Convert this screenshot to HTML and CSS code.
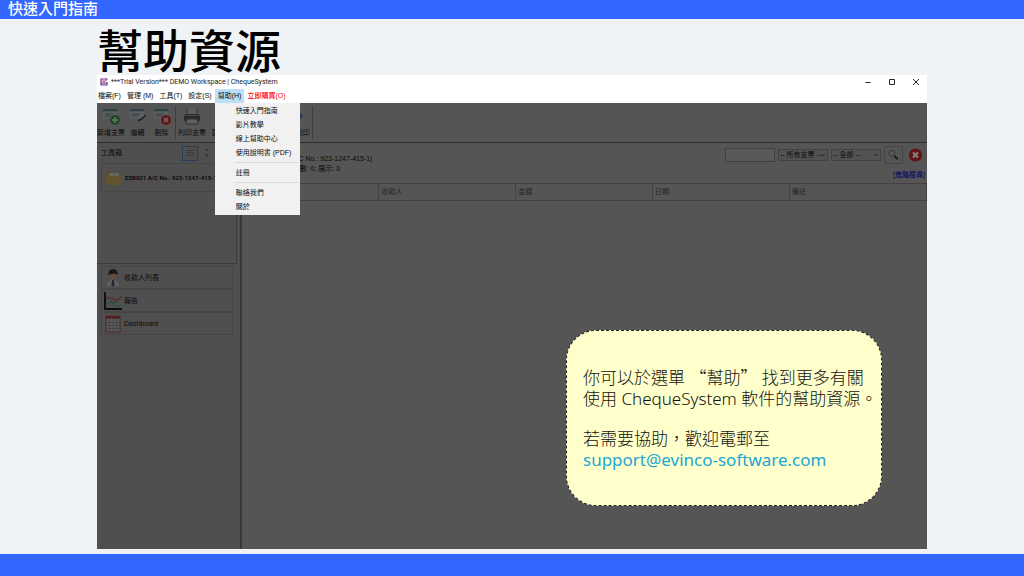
FILE: index.html
```html
<!DOCTYPE html>
<html lang="zh-Hant">
<head>
<meta charset="utf-8">
<title>快速入門指南</title>
<link rel="stylesheet" href="styles.css">
</head>
<body>
<header class="guide-bar">快速入門指南</header>
<main class="slide">
  <h1 class="slide-title">幫助資源</h1>
  <section class="window">
    <div class="titlebar">
      <svg class="app-icon" viewBox="0 0 8 8"><path d="M7 4v3H1V1h6" fill="#fff" stroke="#66358c" stroke-width="1.2"/><path d="M1 5.200h6" stroke="#66358c"/><path d="M2.500 2.500l1.500 1.500L7.600.6" fill="none" stroke="#c03e76" stroke-width="1.100"/></svg>
      <span class="titlebar-text">***Trial Version*** DEMO Workspace | ChequeSystem</span>
      <div class="window-controls">
        <button class="window-button" aria-label="最小化"><svg viewBox="0 0 8 8"><path d="M1.500 4.500h5"/></svg></button>
        <button class="window-button" aria-label="最大化"><svg viewBox="0 0 8 8"><path d="M1.500 1.500h5v5h-5z"/></svg></button>
        <button class="window-button" aria-label="關閉"><svg viewBox="0 0 8 8"><path d="M1 1l6 6M7 1L1 7"/></svg></button>
      </div>
    </div>
    <nav class="menubar">
      <button class="menu-item">檔案(F)</button>
      <button class="menu-item">管理 (M)</button>
      <button class="menu-item">工具(T)</button>
      <button class="menu-item">設定(S)</button>
      <div class="menu-anchor">
        <button class="menu-item menu-item-open">幫助(H)</button>
        <div class="dropdown">
          <button class="dropdown-item">快速入門指南</button>
          <button class="dropdown-item">影片教學</button>
          <button class="dropdown-item">線上幫助中心</button>
          <button class="dropdown-item">使用說明書 (PDF)</button>
          <hr class="dropdown-line">
          <button class="dropdown-item">註冊</button>
          <hr class="dropdown-line">
          <button class="dropdown-item">聯絡我們</button>
          <button class="dropdown-item">關於</button>
        </div>
      </div>
      <button class="menu-item menu-item-buy">立即購買(O)</button>
    </nav>
    <div class="toolbar">
      <button class="tool"><svg class="tool-icon" viewBox="0 0 20 20"><path d="M2 2h14v2H2z" fill="#29404a"/><path d="M2 5h14v6H2z" fill="#5b6062"/><path d="M4 7h8M4 9h6" stroke="#343b3e"/><circle cx="14" cy="13" r="5" fill="#1e4a20"/><path d="M14 10v6M11 13h6" stroke="#6b746a" stroke-width="1.600"/></svg>新增支票</button>
      <button class="tool"><svg class="tool-icon" viewBox="0 0 20 20"><path d="M2 2h14v2H2z" fill="#29404a"/><path d="M2 5h14v6H2z" fill="#5b6062"/><path d="M4 7h8M4 9h6" stroke="#343b3e"/><path d="M18 8l-5 4.500-3 1" fill="none" stroke="#1f1f1f" stroke-width="1.500"/></svg>編輯</button>
      <button class="tool"><svg class="tool-icon" viewBox="0 0 20 20"><path d="M2 2h14v2H2z" fill="#29404a"/><path d="M2 5h14v6H2z" fill="#5b6062"/><path d="M4 7h8M4 9h6" stroke="#343b3e"/><circle cx="14" cy="13" r="5" fill="#651515"/><path d="M12 11l4 4M16 11l-4 4" stroke="#776a6a" stroke-width="1.500"/></svg>刪除</button>
      <span class="tool-divider"></span>
      <button class="tool"><svg class="tool-icon" viewBox="0 0 20 20"><path d="M5 1h10v7H5z" fill="#5c5c5c"/><path d="M5 1v7M15 1v7" stroke="#343434"/><rect x="2" y="7" width="16" height="8" rx="3" fill="#2b2b2b"/><path d="M4 8.500h12" stroke="#484848"/><path d="M5 12h10l1 5H4z" fill="#606060" stroke="#333"/></svg>列印支票</button>
      <button class="tool tool-spaced"><svg class="tool-icon" viewBox="0 0 20 20"><path d="M2 2h14v2H2z" fill="#29404a"/><path d="M2 5h14v6H2z" fill="#5b6062"/></svg>匯入支票</button>
      <button class="tool tool-end"><svg class="tool-icon" viewBox="0 0 20 20"><path d="M3 3h8v12H3z" fill="#5b6062"/><path d="M11 4l5 5-5 5zM16 9h-5" fill="none" stroke="#243357" stroke-width="1.500"/></svg>批次列印</button>
      <span class="tool-divider"></span>
    </div>
    <div class="workspace">
      <aside class="sidebar">
        <div class="toolbox">
          <div class="toolbox-head">工具箱
            <div class="toolbox-actions">
              <button class="view-button view-button-on" aria-label="列表"><svg viewBox="0 0 12 10"><path d="M2 2.500h8M2 5h8M2 7.500h8" stroke="#3b3732"/></svg></button>
              <button class="view-button" aria-label="排序"><svg viewBox="0 0 12 10"><path d="M4.500 3.500l1.500-2 1.500 2zM4.500 6.500l1.500 2 1.500-2z" fill="#352e2e"/></svg></button>
            </div>
          </div>
          <button class="account"><svg class="account-icon" viewBox="0 0 18 16"><path d="M1 3l5-2 1 2h9v10H1z" fill="#574b29"/><path d="M4 3h10v5H4z" fill="#66665c"/><path d="M1 6h16l-1 9H2z" fill="#62552d"/></svg><span class="account-name">ESB021 A/C No.: 923-1247-415-1</span></button>
        </div>
        <div class="shortcuts">
          <button class="shortcut"><svg class="shortcut-icon" viewBox="0 0 18 18"><path d="M3 17q0-6 6-6t6 6z" fill="#606060"/><circle cx="9" cy="6" r="4" fill="#604d3c"/><path d="M4.500 6Q4 0 9 0t4.500 6Q11 3 4.500 6z" fill="#1c1815"/><path d="M8.200 11h1.600l1 5L9 17.500 7.200 16z" fill="#202833"/></svg>收款人列表</button>
          <button class="shortcut"><svg class="shortcut-icon" viewBox="0 0 18 18"><path d="M1 0v17h17" fill="none" stroke="#0c0c0c" stroke-width="1.800"/><path d="M2 7q3-3 7 0t9-3" fill="none" stroke="#572b29" stroke-width="1.200"/><path d="M2 13q4-5 8-1t7 1" fill="none" stroke="#28533a" stroke-width="1.200"/><path d="M2 4l8 7 7-5" fill="none" stroke="#35453d"/></svg>報告</button>
          <button class="shortcut"><svg class="shortcut-icon" viewBox="0 0 18 18"><rect x="2" y="1" width="14" height="16" fill="#5a5a5a" stroke="#522727"/><path d="M2 2.500h14" stroke="#4d1717" stroke-width="2"/><path d="M2 7.500h14M2 10.500h14M2 13.500h14M5.500 4v13M9 4v13M12.500 4v13" stroke="#444" stroke-width=".8"/></svg>Dashboard</button>
        </div>
      </aside>
      <div class="content">
        <div class="content-head">
          <div class="summary"><div>帳戶 ESB021 (A/C No.: 923-1247-415-1)</div><div>已選擇: 0; 支票總數: 0; 展示: 0</div></div>
          <div class="search">
            <div class="search-row">
              <input class="search-input" type="text" aria-label="搜尋">
              <select class="search-select" aria-label="支票類別"><option>-- 所有支票 --</option></select>
              <select class="search-select" aria-label="範圍"><option>-- 全部 --</option></select>
              <button class="search-button" aria-label="搜尋"><svg viewBox="0 0 14 14"><circle cx="5" cy="5" r="3.500" fill="#555c5f" stroke="#303030"/><path d="M8 8l4 4" stroke="#171717" stroke-width="2"/></svg></button>
              <button class="clear-button" aria-label="清除"><svg viewBox="0 0 14 14"><circle cx="7" cy="7" r="6.600" fill="#641617"/><path d="M4.500 4.500l5 5M9.500 4.500l-5 5" stroke="#858080" stroke-width="2.200"/></svg></button>
            </div>
            <a class="advanced" href="#">[進階搜尋]</a>
          </div>
        </div>
        <table class="cheques">
          <thead><tr><th>支票號碼</th><th>收款人</th><th>金額</th><th>日期</th><th>備註</th></tr></thead>
        </table>
      </div>
    </div>
    <aside class="callout">
      <p>你可以於選單 <span class="quoted">“幫助”</span> 找到更多有關<br>使用 ChequeSystem 軟件的幫助資源。</p>
      <p>若需要協助，歡迎電郵至<br><a class="mail" href="mailto:support@evinco-software.com">support@evinco-software.com</a></p>
    </aside>
  </section>
</main>
<footer class="footer-bar"></footer>
</body>
</html>
```

FILE: styles.css
```css
* { box-sizing: border-box; }
body {
  margin: 0;
  min-height: 100vh;
  display: flex;
  flex-direction: column;
  background: #f0f3f5;
  font-family: "Liberation Sans", "Noto Sans CJK TC", sans-serif;
}
button, input, select {
  margin: 0;
  padding: 0;
  border: 0;
  background: none;
  color: inherit;
  font: inherit;
}
svg { display: block; }
.guide-bar {
  height: 19px;
  padding-left: 8px;
  background: #3366ff;
  color: #fff;
  font: 500 15px/15px "Noto Sans CJK TC", sans-serif;
}
.slide {
  flex: 1;
  display: flex;
  flex-direction: column;
  padding: 0 97px 5px;
}
.slide-title {
  margin: 0;
  height: 56px;
  font: 500 46px/58px "Noto Sans CJK TC", sans-serif;
  color: #000;
}
.window {
  position: relative;
  flex: 1;
  display: flex;
  flex-direction: column;
  background: #555;
  font-size: 7px;
  line-height: 10px;
  color: #0b0b0b;
}
.titlebar {
  display: flex;
  align-items: center;
  gap: 3px;
  height: 14px;
  padding-left: 3px;
  background: #fff;
  color: #222;
}
.titlebar-text { font-family: Roboto, sans-serif; }
.app-icon { width: 8px; height: 8px; }
.window-controls { display: flex; gap: 16px; margin-left: auto; padding-right: 7px; }
.window-button { width: 8px; height: 8px; }
.window-button svg { fill: none; stroke: #222; stroke-width: 1; }
.menubar {
  position: relative;
  z-index: 2;
  display: flex;
  height: 14px;
  background: #fff;
}
.menu-item { height: 14px; padding: 0 3px; white-space: nowrap; }
.menu-item:first-child { padding-left: 1px; }
.menu-anchor { position: relative; }
.menu-anchor .menu-item-open { padding-left: 3px; background: #bcdff7; }
.menu-item-buy { color: #f00; font-weight: 500; }
.dropdown {
  position: absolute;
  top: 14px;
  left: 0;
  width: 85px;
  padding: 1px 0;
  background: #f1f1f1;
}
.dropdown-item {
  display: block;
  width: 100%;
  height: 14px;
  padding-left: 21px;
  text-align: left;
  white-space: nowrap;
}
.dropdown-line { height: 1px; margin: 2px 2px 3px 20px; border: 0; background: #d8d8d8; }
.toolbar {
  display: flex;
  align-items: stretch;
  height: 40px;
  border-bottom: 1px solid #2d2d2d;
}
.tool {
  display: flex;
  flex-direction: column;
  align-items: center;
  gap: 1px;
  min-width: 23px;
  padding-top: 4px;
  white-space: nowrap;
}
.tool-icon { width: 20px; height: 20px; }
.tool-divider { width: 1px; margin: 3px 2px; background: #3d3d3d; }
.tool + .tool { margin-left: 1px; }
.tool + .tool-spaced { margin-left: 6px; }
.tool + .tool-end { margin-left: auto; }
.tool-end + .tool-divider { margin-right: 74%; }
.workspace { flex: 1; display: flex; }
.sidebar {
  width: 145px;
  border-right: 2px solid #393939;
  background: #4f4f4f;
}
.toolbox {
  height: 121px;
  margin-right: 3px;
  border: 1px solid #3c3c3c;
  border-width: 0 1px 1px 0;
}
.toolbox-head {
  display: flex;
  align-items: center;
  height: 20px;
  padding-left: 4px;
}
.toolbox-actions { display: flex; gap: 1px; margin-left: auto; padding-right: 21px; }
.view-button { width: 16px; height: 15px; padding: 1px; }
.view-button-on { border: 1px solid #273e5b; }
.account, .shortcut {
  display: flex;
  align-items: center;
  width: 100%;
  border: 1px solid #464646;
}
.account { height: 29px; margin-left: 4px; padding-left: 3px; gap: 2px; }
.account-icon { flex: none; width: 18px; height: 16px; }
.account-name {
  font-family: Roboto, sans-serif;
  font-size: 6px;
  font-weight: 700;
  white-space: nowrap;
}
.shortcuts { padding: 2px 7px 0 4px; }
.shortcut { height: 23px; padding-left: 2px; gap: 2px; }
.shortcut-icon { width: 18px; height: 18px; }
.content { flex: 1; min-width: 0; }
.content-head {
  display: flex;
  justify-content: space-between;
  height: 40px;
  padding: 3px 2px 0 4px;
}
.summary { padding-top: 8px; white-space: nowrap; }
.search-row { display: flex; align-items: center; gap: 3px; }
.search-input { width: 50px; height: 14px; border: 1px solid #3f3f3f; background: #595959; }
.search-select {
  width: 50px;
  height: 12px;
  padding-left: 1px;
  border: 1px solid #424242;
  appearance: none;
  background-color: #525252;
  background-image:
    linear-gradient(45deg, transparent 50%, #2b2b2b 50%, #2b2b2b 75%, transparent 75%),
    linear-gradient(315deg, transparent 50%, #2b2b2b 50%, #2b2b2b 75%, transparent 75%);
  background-repeat: no-repeat;
  background-position: right 4px center, right 2px center;
  background-size: 2px 3px;
  line-height: 10px;
}
.search-button { width: 19px; height: 18px; padding: 2px; border: 1px solid #454545; }
.search-button svg { width: 13px; height: 12px; }
.clear-button { width: 19px; height: 18px; padding: 2px; }
.clear-button svg { width: 15px; height: 14px; }
.advanced {
  display: block;
  margin-top: 6px;
  text-align: right;
  text-decoration: none;
  color: #080861;
  font-weight: 500;
}
.cheques { width: 100%; border-collapse: collapse; table-layout: fixed; }
.cheques th {
  height: 17px;
  padding: 0 2px;
  border: 1px solid #424242;
  border-left: 0;
  text-align: left;
  font-weight: 400;
  color: #252525;
}
.callout {
  position: absolute;
  right: 45px;
  bottom: 43px;
  width: 316px;
  height: 176px;
  padding: 35px 0 0 16px;
  border: 1px dashed #222;
  border-radius: 30px;
  background: #ffffcc;
  color: #111;
  font: 300 17px/21px "Noto Sans", "Noto Sans CJK TC", sans-serif;
  white-space: nowrap;
}
.callout p { margin: 0 0 19px; }
.quoted { font-family: "Noto Sans CJK TC", sans-serif; }
.mail { color: #1ba6d6; text-decoration: none; font-weight: 400; }
.footer-bar { height: 22px; background: #3366ff; }
```
